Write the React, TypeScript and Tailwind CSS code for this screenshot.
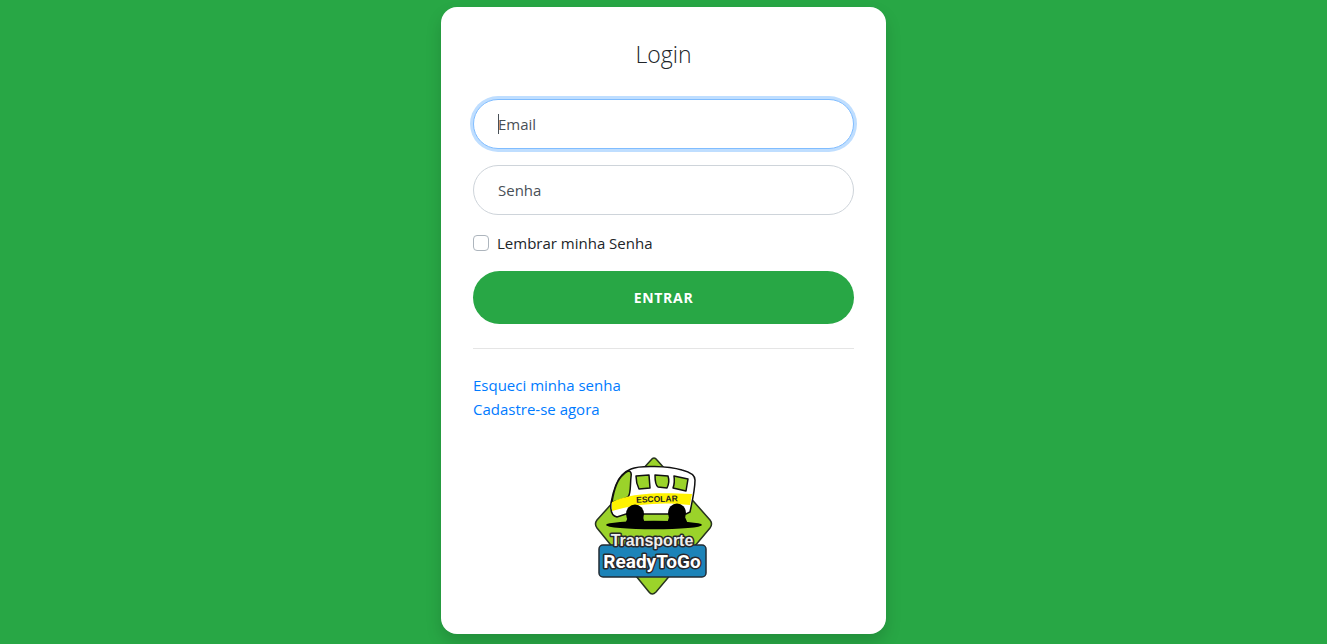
function Logo() {
  return (
    <svg width="126" height="146" viewBox="590 452 126 146" role="img" aria-label="Transporte ReadyToGo">
      <path d="M651 460Q654 456 657 460L710 520Q713 524 710 528L656 592Q652 596 649 592L597 528Q594 524 597 520Z" fill="#9bd32a" stroke="#27331f" strokeWidth="1.5" />
      <ellipse cx="654" cy="525" rx="48" ry="4.3" fill="#000" />
      <path d="M631 469C640 465 668 466 682 470C690 472 695 475 695 480C695 490 692 502 690 512L686 514H626L617 517C612 516 610 512 611 503C613 492 616 481 622 475Q626 471 631 469Z" fill="#fff" stroke="#111" strokeWidth="1.5" />
      <path d="M629 471Q632 472 631 477C630 486 631 494 628 497Q622 500 612 502C614 490 618 479 623 475Q627 471 629 471Z" fill="#9bd32a" stroke="#111" strokeWidth="1.5" />
      <path d="M612 502C630 494 650 492 692 494L690 505C665 502 638 503 612 511Z" fill="#fff200" />
      <g fill="#9bd32a" stroke="#111" strokeWidth="1.5" strokeLinejoin="round">
        <path d="M636 476L649 475L650 488L639 489Q636 483 636 476Z" />
        <path d="M655 475L668 476Q670 482 667 488L658 487Q655 485 655 475Z" />
        <path d="M674 476L688 479L686 491L673 488Q675 483 674 476Z" />
      </g>
      <ellipse cx="635" cy="514" rx="9" ry="9.5" fill="#000" />
      <ellipse cx="677" cy="513" rx="9" ry="9.5" fill="#000" />
      <path d="M628 517H643L645 524H625ZM669 517H685L688 524H667Z" fill="#000" />
      <text x="657" y="502" textAnchor="middle" fontFamily="Liberation Sans, sans-serif" fontWeight="700" fontSize="8.5" fill="#222" transform="rotate(-2 657 502)">ESCOLAR</text>
      <rect x="599" y="545" width="107" height="32" rx="4" fill="#1c83b8" stroke="#222c35" strokeWidth="1.5" />
      <g textAnchor="middle" fill="#fff" stroke="#29282b" strokeLinejoin="round" paintOrder="stroke" fontWeight="700">
        <text x="652" y="546" fontFamily="Liberation Sans, sans-serif" fontSize="16" strokeWidth="3" fill="#eee">Transporte</text>
        <text x="652" y="568" fontFamily="Roboto, Liberation Sans, sans-serif" fontSize="19" strokeWidth="3">ReadyToGo</text>
      </g>
    </svg>
  );
}

const field =
  "h-[50px] w-full rounded-full border border-[#ced4da] bg-white px-6 text-[15px] text-[#495057] placeholder:text-[#495057] outline-none focus:border-[#80bdff] focus:ring-3 focus:ring-[#bfdeff]";

export default function App() {
  return (
    <div className="min-h-screen bg-[#28a745] pt-[7px] pb-2 font-['Open_Sans','Noto_Sans',sans-serif] text-[15px] leading-6 text-[#212529]">
      <main className="mx-auto max-w-[445px] rounded-2xl bg-white p-8 shadow-[0_8px_16px_rgba(0,0,0,0.15)]">
        <h1 className="mb-[30px] text-center text-[23px] leading-[30px] font-light">Login</h1>
        <form className="flex flex-col gap-4" onSubmit={(e) => e.preventDefault()}>
          <div className="relative">
            <input
              type="email"
              aria-label="Email"
              placeholder="Email"
              autoFocus
              className={`peer placeholder-shown:caret-transparent ${field}`}
            />
            <span
              aria-hidden="true"
              className="pointer-events-none absolute inset-y-[15px] left-[25px] hidden w-px bg-[#495057] peer-focus:peer-placeholder-shown:block"
            />
          </div>
          <input type="password" aria-label="Senha" placeholder="Senha" className={field} />
          <label className="flex items-center gap-2">
            <input type="checkbox" className="size-4 appearance-none rounded-sm border border-[#adb5bd] bg-white checked:bg-[#007bff]" />
            Lembrar minha Senha
          </label>
          <button type="submit" className="h-[53px] rounded-full bg-[#28a745] text-sm font-bold tracking-wider text-white">
            ENTRAR
          </button>
        </form>
        <hr className="my-6 border-black/10" />
        <nav className="flex flex-col items-start text-[#007bff]">
          <a href="#recuperar">Esqueci minha senha</a>
          <a href="#cadastro">Cadastre-se agora</a>
        </nav>
        <div className="flex justify-center pt-[31px] pr-[22px] pb-1">
          <Logo />
        </div>
      </main>
    </div>
  );
}
